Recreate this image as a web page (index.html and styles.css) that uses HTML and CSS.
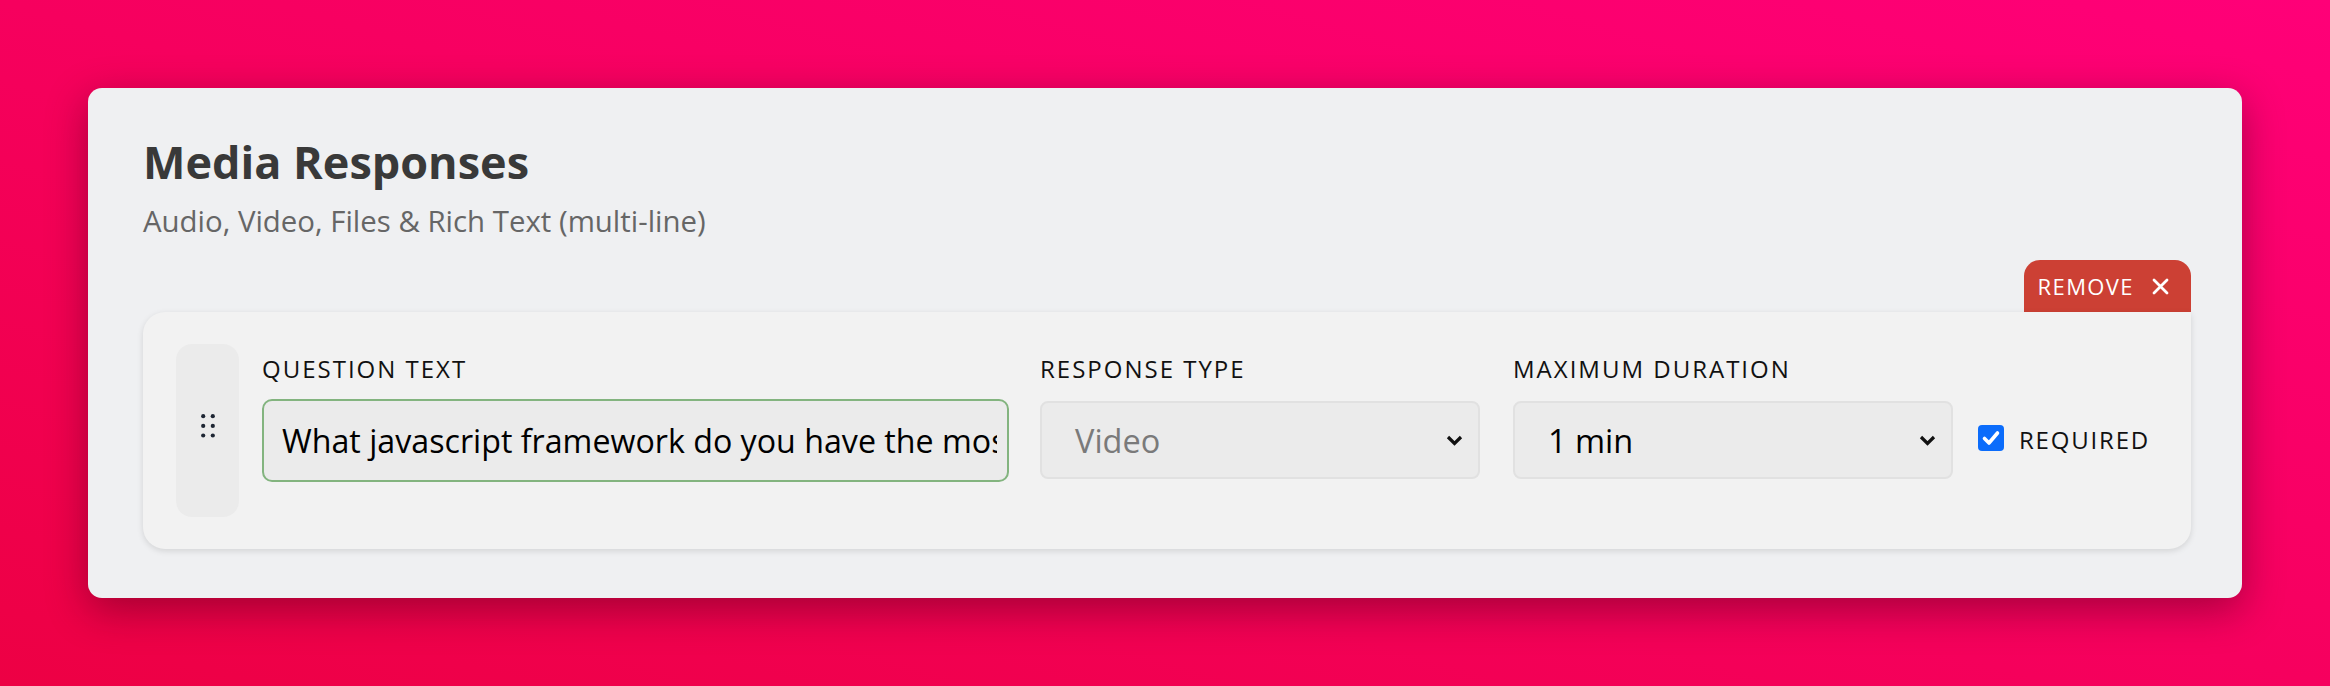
FILE: index.html
```html
<!DOCTYPE html>
<html lang="en">
<head>
<meta charset="utf-8">
<title>Media Responses</title>
<link rel="stylesheet" href="styles.css">
</head>
<body>
<main class="page">
  <section class="card">
    <h1 class="title">Media Responses</h1>
    <p class="subtitle">Audio, Video, Files &amp; Rich Text (multi-line)</p>
    <div class="question">
      <button class="remove" type="button">
        <span class="remove-text">REMOVE</span>
        <svg class="remove-icon" width="17" height="17" viewBox="0 0 17 17" aria-hidden="true">
          <path d="M2 2 L15 15 M15 2 L2 15" stroke="#fff" stroke-width="2.8" stroke-linecap="round" fill="none"/>
        </svg>
      </button>
      <div class="question-card">
        <div class="handle">
          <svg width="14" height="24" viewBox="0 0 14 24" aria-hidden="true">
            <circle cx="2.2" cy="2.2" r="2.1" fill="#1e2633"/>
            <circle cx="11.8" cy="2.2" r="2.1" fill="#1e2633"/>
            <circle cx="2.2" cy="11.9" r="2.1" fill="#1e2633"/>
            <circle cx="11.8" cy="11.9" r="2.1" fill="#1e2633"/>
            <circle cx="2.2" cy="21.5" r="2.1" fill="#1e2633"/>
            <circle cx="11.8" cy="21.5" r="2.1" fill="#1e2633"/>
          </svg>
        </div>
        <div class="fields">
          <div class="field field-question">
            <label class="label">QUESTION TEXT</label>
            <input class="text-input" type="text" value="What javascript framework do you have the most experience with?">
          </div>
          <div class="field field-select">
            <label class="label">RESPONSE TYPE</label>
            <div class="select select-disabled">
              <span>Video</span>
              <svg class="chevron" width="17" height="11" viewBox="0 0 17 11" aria-hidden="true">
                <path d="M2 2 L8.5 8.5 L15 2" stroke="#111" stroke-width="3.2" fill="none"/>
              </svg>
            </div>
          </div>
          <div class="field field-select field-duration">
            <label class="label">MAXIMUM DURATION</label>
            <div class="select">
              <span>1 min</span>
              <svg class="chevron" width="17" height="11" viewBox="0 0 17 11" aria-hidden="true">
                <path d="M2 2 L8.5 8.5 L15 2" stroke="#111" stroke-width="3.2" fill="none"/>
              </svg>
            </div>
          </div>
          <label class="required">
            <span class="checkbox">
              <svg width="26" height="26" viewBox="0 0 26 26" aria-hidden="true">
                <path d="M6.5 13.5 L11 18 L19.5 8" stroke="#fff" stroke-width="3.6" fill="none" stroke-linecap="round" stroke-linejoin="round"/>
              </svg>
            </span>
            <span class="required-text">REQUIRED</span>
          </label>
        </div>
      </div>
    </div>
  </section>
</main>
</body>
</html>
```
FILE: styles.css
```css
html, body {
  margin: 0;
  height: 100%;
}

body {
  font-family: "Open Sans", "Noto Sans", sans-serif;
  background: linear-gradient(to top right, #ed0044, #ff0078);
}

.page {
  padding: 88px;
  box-sizing: border-box;
  height: 100%;
}

.card {
  background: #eff0f2;
  border-radius: 14px;
  padding: 47px 51px 49px 55px;
  box-shadow: 0 12px 40px rgba(70, 0, 20, 0.45);
}

.title {
  margin: 0;
  font-size: 45px;
  line-height: 54px;
  font-weight: 700;
  color: #393939;
}

.subtitle {
  margin: 14px 0 0;
  font-size: 29.4px;
  line-height: 36px;
  color: #666;
}

.question {
  margin-top: 21px;
  display: flex;
  flex-direction: column;
}

.remove {
  align-self: flex-end;
  height: 52px;
  display: flex;
  align-items: center;
  gap: 18px;
  padding: 0 22px 0 14px;
  border: 0;
  border-radius: 16px 16px 0 0;
  background: #cc4034;
  color: #fff;
  font-family: inherit;
  font-size: 22px;
  letter-spacing: 1.4px;
}

.remove-icon {
  display: block;
}

.question-card {
  display: flex;
  gap: 23px;
  padding: 32px 0 32px 33px;
  background: #f2f2f2;
  border-radius: 0 0 22px 22px;
  border-top-left-radius: 22px;
  box-shadow: 0 2px 6px rgba(0, 0, 0, 0.12);
}

.handle {
  width: 63px;
  flex: none;
  background: #ebebeb;
  border-radius: 16px;
  display: flex;
  align-items: center;
  justify-content: center;
  padding-bottom: 10px;
  box-sizing: border-box;
}

.handle svg {
  display: block;
}

.fields {
  display: flex;
  padding: 8px 0 35px;
}

.field {
  display: flex;
  flex-direction: column;
}

.field-question {
  width: 747px;
}

.field-select {
  width: 440px;
  margin-left: 31px;
}

.field-duration {
  margin-left: 33px;
}

.label {
  font-size: 24px;
  line-height: 33px;
  letter-spacing: 2px;
  color: #111;
}

.text-input {
  margin-top: 14px;
  height: 83px;
  box-sizing: border-box;
  border: 2px solid #83b47f;
  border-radius: 10px;
  background: #ebebeb;
  padding: 0 10px 0 18px;
  font-family: inherit;
  font-size: 32.2px;
  color: #000;
  outline: none;
}

.select {
  margin-top: 16px;
  height: 78px;
  box-sizing: border-box;
  border: 2px solid #e1e1e1;
  border-radius: 8px;
  background: #ebebeb;
  padding: 0 15px 0 33px;
  display: flex;
  align-items: center;
  justify-content: space-between;
  font-size: 32.5px;
  color: #000;
}

.select-disabled {
  color: #7a7a7a;
}

.chevron {
  display: block;
}

.required {
  margin-left: 25px;
  margin-top: 46px;
  height: 83px;
  display: flex;
  align-items: center;
  gap: 15px;
}

.checkbox {
  width: 26px;
  height: 26px;
  border-radius: 4px;
  background: #0b6cfb;
  display: block;
  margin-top: -3px;
}

.checkbox svg {
  display: block;
}

.required-text {
  font-size: 24px;
  letter-spacing: 1.8px;
  color: #111;
}
```
